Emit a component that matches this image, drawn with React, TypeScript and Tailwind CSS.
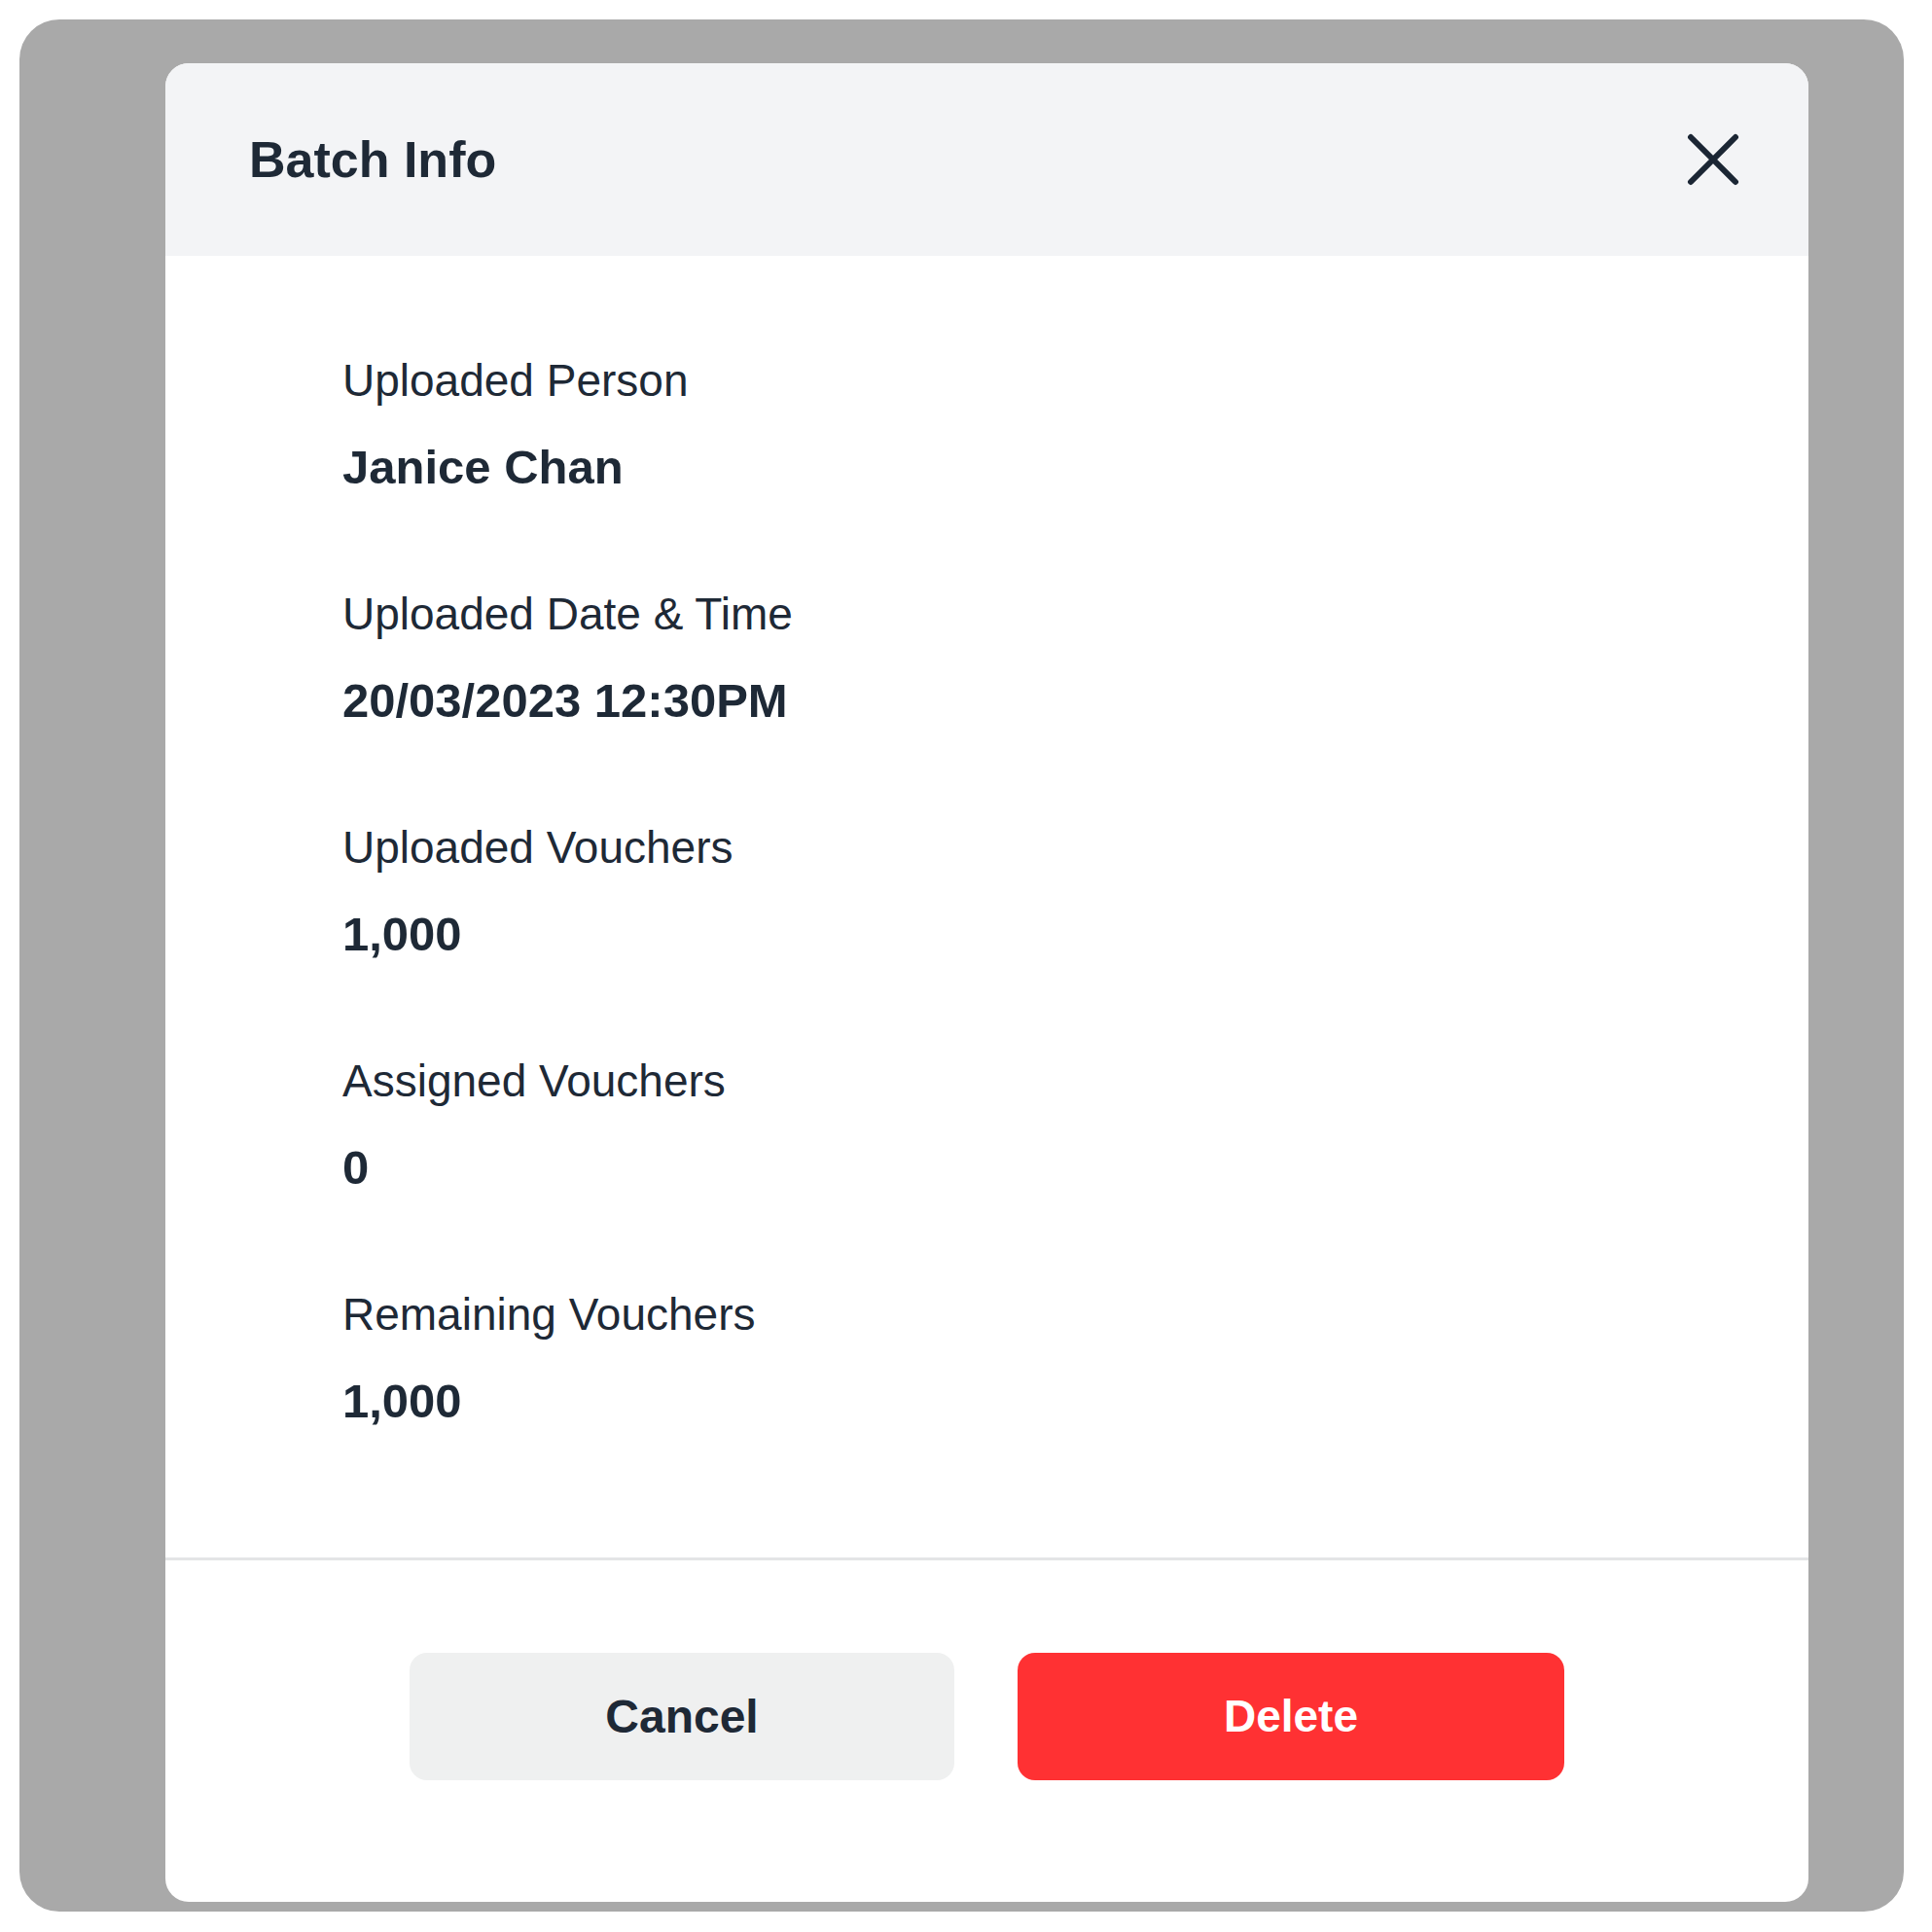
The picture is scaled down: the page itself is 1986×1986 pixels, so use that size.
const fields = [
  { label: "Uploaded Person", value: "Janice Chan" },
  { label: "Uploaded Date & Time", value: "20/03/2023 12:30PM" },
  { label: "Uploaded Vouchers", value: "1,000" },
  { label: "Assigned Vouchers", value: "0" },
  { label: "Remaining Vouchers", value: "1,000" },
];

function CloseIcon() {
  return (
    <svg width="54" height="54" viewBox="0 0 54 54" fill="none">
      <path
        d="M4 4L50 50M50 4L4 50"
        stroke="#1b2634"
        strokeWidth="6"
        strokeLinecap="round"
      />
    </svg>
  );
}

export default function App() {
  return (
    <div className="min-h-screen w-full bg-white p-[20px] font-['Liberation_Sans',Arial,sans-serif] text-[#1e2936]">
      <div className="w-[1937px] h-[1945px] rounded-[41px] bg-[#a9a9a9] pl-[150px] pr-[98px] pt-[45px]">
        <div className="flex h-[1890px] flex-col overflow-hidden rounded-[24px] bg-white">
          {/* header */}
          <div className="flex h-[198px] shrink-0 items-center justify-between bg-[#f3f4f6] pl-[86px] pr-[71px]">
            <h2 className="text-[52px] font-bold leading-none">Batch Info</h2>
            <button className="flex items-center justify-center">
              <CloseIcon />
            </button>
          </div>

          {/* body */}
          <div className="flex flex-col gap-[95px] pl-[182px] pt-[100px] pb-[133px]">
            {fields.map((f) => (
              <div key={f.label} className="flex flex-col gap-[33px]">
                <span className="text-[46px] leading-[56px]">{f.label}</span>
                <span className="text-[49px] font-bold leading-[56px]">{f.value}</span>
              </div>
            ))}
          </div>

          {/* footer */}
          <div className="flex justify-center gap-[65px] border-t-[3px] border-[#e4e5e6] pt-[95px]">
            <button className="flex h-[131px] w-[560px] items-center justify-center rounded-[18px] bg-[#eff0f0] text-[48px] font-bold text-[#1e2936]">
              Cancel
            </button>
            <button className="flex h-[131px] w-[562px] items-center justify-center rounded-[18px] bg-[#ff3133] text-[46px] font-bold text-white">
              Delete
            </button>
          </div>
        </div>
      </div>
    </div>
  );
}
